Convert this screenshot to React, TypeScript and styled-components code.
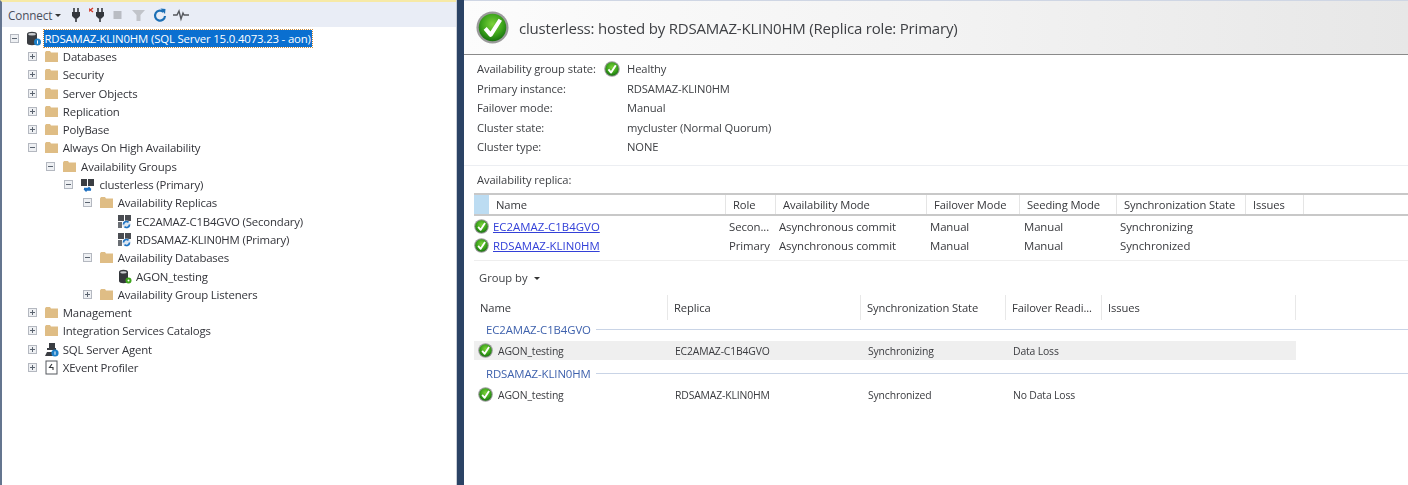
import React, { useId } from "react";
import styled, { createGlobalStyle } from "styled-components";

const GlobalStyle = createGlobalStyle`
  html, body { margin: 0; padding: 0; background: #fff; }
  body { font-family: "Open Sans", "Noto Sans", sans-serif; font-size: 12px; color: #2b2b2b; }
`;

const Page = styled.div`
  width: 1408px;
  height: 485px;
  display: flex;
  overflow: hidden;
  filter: blur(0.55px);
`;

/* ---------- left: object explorer ---------- */

const Explorer = styled.div`
  width: 456px;
  flex: none;
  display: flex;
  flex-direction: column;
  border-left: 2px solid #64758f;
  box-sizing: border-box;
  border-top: 2px solid #f6e9a6;
`;

const Toolbar = styled.div`
  height: 25px;
  flex: none;
  display: flex;
  align-items: center;
  padding-left: 6px;
  background: #e9edf6;
  color: #4a4f5c;
`;

const ConnectLabel = styled.span`
  font-size: 11.7px;
  letter-spacing: -0.1px;
`;

const Caret = styled.span`
  width: 0;
  height: 0;
  margin: 1px 7px 0 3px;
  border-left: 3px solid transparent;
  border-right: 3px solid transparent;
  border-top: 3px solid #333;
`;

const ToolIcon = styled.svg`
  width: 16px;
  height: 16px;
  margin-right: 5px;
  flex: none;
`;

const Tree = styled.div`
  padding-top: 2px;
  display: flex;
  flex-direction: column;
`;

const TreeRow = styled.div<{ $level: number }>`
  height: 18.3px;
  display: flex;
  align-items: center;
  padding-left: ${(p) => 7.5 + p.$level * 18.3}px;
  white-space: nowrap;
`;

const Expander = styled.span`
  width: 9px;
  height: 9px;
  flex: none;
  box-sizing: border-box;
  border: 1px solid #b4b8c0;
  background: #eef0f3;
  color: #5b6470;
  position: relative;
  margin-right: 7px;
  &::before {
    content: "";
    position: absolute;
    left: 1px;
    right: 1px;
    top: 3px;
    height: 1px;
    background: currentColor;
  }
`;

const ExpanderPlus = styled(Expander)`
  &::after {
    content: "";
    position: absolute;
    top: 1px;
    bottom: 1px;
    left: 3px;
    width: 1px;
    background: currentColor;
  }
`;

const ExpanderGap = styled.span`
  width: 16px;
  flex: none;
`;

const NodeIcon = styled.svg`
  width: 15px;
  height: 15px;
  flex: none;
  margin-right: 4px;
`;

const NodeLabel = styled.span<{ $selected?: boolean }>`
  font-size: 11.4px;
  letter-spacing: -0.17px;
  line-height: 17px;
  color: ${(p) => (p.$selected ? "#fff" : "#33343a")};
  background: ${(p) => (p.$selected ? "#0a6fd0" : "transparent")};
  outline: ${(p) => (p.$selected ? "1px dotted #c98a3c" : "none")};
  padding: ${(p) => (p.$selected ? "0 1px" : "0")};
  margin-left: ${(p) => (p.$selected ? "-1px" : "0")};
`;

/* ---------- right: dashboard ---------- */

const Divider = styled.div`
  width: 8px;
  flex: none;
  background: linear-gradient(to right, #c9ced6 0, #c9ced6 1.5px, #2b4365 1.5px);
`;

const Dashboard = styled.div`
  flex: 1;
  min-width: 0;
  display: flex;
  flex-direction: column;
`;

const Banner = styled.div`
  height: 53px;
  flex: none;
  display: flex;
  align-items: center;
  padding-left: 12px;
  gap: 10px;
  background: linear-gradient(to right, #fcfcfc 0, #f3f3f3 50%, #e7e7e7 100%);
  border-top: 1px solid #cfd6e4;
  border-bottom: 1px solid #8a8a8a;
`;

const BannerTitle = styled.div`
  font-size: 15px;
  letter-spacing: -0.2px;
  color: #3f4145;
`;

const Info = styled.div`
  padding: 4px 0 8px 13px;
  display: grid;
  grid-template-columns: 150px 1fr;
  grid-auto-rows: 19.5px;
  align-items: center;
  border-bottom: 1px solid #eceef2;
`;

const InfoLabel = styled.div`
  font-size: 11.2px;
  letter-spacing: -0.1px;
  color: #3f4145;
`;

const InfoValue = styled.div`
  font-size: 11.2px;
  letter-spacing: -0.1px;
  color: #3f4145;
  position: relative;
`;

const HealthFlag = styled.span`
  position: absolute;
  left: -23px;
  top: 0;
`;

const SectionTitle = styled.div`
  padding: 6px 0 0 13px;
  height: 21px;
  font-size: 11.2px;
  letter-spacing: -0.1px;
  color: #3f4145;
`;

const replicaColumns = "15px 237px 50px 151px 93px 97px 129px 58px 1fr";
const stateColumns = "194px 193px 145px 96px 194px 1fr";

const ReplicaHeader = styled.div`
  margin-left: 10px;
  height: 23px;
  display: grid;
  grid-template-columns: ${replicaColumns};
  border-top: 2px solid #c8c8c8;
  border-bottom: 2px solid #c8c8c8;
  box-sizing: border-box;
`;

const HeaderStub = styled.div`
  background: #bcdcf2;
`;

const HeaderCell = styled.div`
  display: flex;
  align-items: center;
  padding-left: 7px;
  font-size: 11.2px;
  letter-spacing: -0.1px;
  color: #36373b;
  border-right: 1px solid #e5e5e5;
  white-space: nowrap;
`;

const ReplicaRows = styled.div`
  margin-left: 10px;
  padding: 1px 0 5px;
  border-bottom: 1px solid #eeeeee;
`;

const ReplicaRow = styled.div`
  height: 19px;
  display: grid;
  grid-template-columns: 19px 236px 50px 151px 94px 96px 1fr;
  align-items: center;
  font-size: 11.4px;
  letter-spacing: -0.1px;
  color: #3a3b3f;
`;

const NameLink = styled.span`
  color: #3340d8;
  letter-spacing: 0.03px;
  text-decoration: underline;
`;

const GroupBy = styled.div`
  height: 34px;
  display: flex;
  align-items: center;
  gap: 6px;
  padding-left: 15px;
  font-size: 11.2px;
  color: #3f4145;
`;

const GroupCaret = styled(Caret)`
  margin: 1px 0 0 0;
`;

const StateHeader = styled.div`
  height: 25px;
  display: grid;
  grid-template-columns: ${stateColumns};
  margin-left: 10px;
  margin-bottom: 3px;
`;

const StateHeaderCell = styled(HeaderCell)<{ $open?: boolean }>`
  padding-left: 6px;
  border-right: ${(p) => (p.$open ? "none" : "1px solid #e8e8e8")};
`;

const GroupRow = styled.div`
  height: 14px;
  margin: 0 0 4.5px 22px;
  display: flex;
  align-items: center;
  gap: 5px;
  font-size: 11.4px;
  letter-spacing: -0.1px;
  color: #3f62ad;
`;

const GroupRule = styled.span`
  flex: 1;
  height: 1px;
  background: #c9d4e6;
`;

const StateRow = styled.div<{ $shaded?: boolean }>`
  height: 19px;
  width: 818px;
  margin: 0 0 6.5px 10px;
  padding-left: 4px;
  display: grid;
  grid-template-columns: 20px 177px 193px 145px 1fr;
  align-items: center;
  font-size: 10.4px;
  letter-spacing: -0.15px;
  color: #3a3b3f;
  background: ${(p) => (p.$shaded ? "#efefef" : "transparent")};
`;

/* ---------- icons ---------- */

function StatusIcon({ size }: { size: number }) {
  const id = useId();
  return (
    <svg width={size} height={size} viewBox="0 0 36 36" style={{ flex: "none", display: "block" }}>
      <defs>
        <radialGradient id={id} cx="50%" cy="38%" r="62%">
          <stop offset="0%" stopColor="#7cd23a" />
          <stop offset="60%" stopColor="#3ea51c" />
          <stop offset="100%" stopColor="#17720f" />
        </radialGradient>
      </defs>
      <circle cx="18" cy="18" r="17.5" fill="#9a9a9a" />
      <circle cx="18" cy="18" r="15" fill={`url(#${id})`} />
      <path d="M10 19l6 7L26.5 9.5" fill="none" stroke="#fff" strokeWidth="4.4" strokeLinejoin="round" />
    </svg>
  );
}

const Folder = () => (
  <NodeIcon viewBox="0 0 15 15">
    <path d="M1 3.5V13h13V3.5H7L6 2H2L1 3.5z" fill="#dfbd85" />
  </NodeIcon>
);

const ServerIcon = () => (
  <NodeIcon viewBox="0 0 15 15">
    <path d="M1 3c0-3 10-3 10 0v9c0 3-10 3-10 0z" fill="#3a3d42" />
    <ellipse cx="6" cy="3.2" rx="3.8" ry="1.2" fill="#c9ccd0" />
    <circle cx="11.5" cy="11" r="3.5" fill="#1c7fc8" />
    <rect x="11" y="9.4" width="1" height="3.4" fill="#fff" />
  </NodeIcon>
);

const ClusterIcon = () => (
  <NodeIcon viewBox="0 0 15 15">
    <rect x="1" y="2" width="6" height="7" fill="#3a3d42" />
    <rect x="8" y="2" width="6" height="7" fill="#3a3d42" />
    <path d="M4 11.5h6l-1.5-1.5M11 13H5l1.5 1.5" fill="none" stroke="#1c6fc0" strokeWidth="1.3" />
  </NodeIcon>
);

const ReplicaIcon = () => (
  <NodeIcon viewBox="0 0 15 15">
    <rect x="1" y="1" width="6" height="6" fill="#4a4d52" />
    <rect x="8" y="1" width="6" height="6" fill="#4a4d52" />
    <rect x="1" y="8" width="4" height="6" fill="#6a6e74" />
    <circle cx="9.5" cy="10.5" r="4" fill="#dbe6f2" />
    <path d="M6.5 10.5a3 3 0 0 1 5-2.2M12.5 10.5a3 3 0 0 1-5 2.2" fill="none" stroke="#1c73c4" strokeWidth="1.7" />
  </NodeIcon>
);

const DatabaseIcon = () => (
  <NodeIcon viewBox="0 0 15 15">
    <path d="M2 3c0-3 9-3 9 0v9c0 3-9 3-9 0z" fill="#34373b" />
    <ellipse cx="6.5" cy="3.4" rx="3.2" ry="1.1" fill="#c9ccd0" />
    <circle cx="11.5" cy="11.5" r="3" fill="#3ea51c" />
    <circle cx="11.5" cy="11.5" r="1" fill="#fff" />
  </NodeIcon>
);

const AgentIcon = () => (
  <NodeIcon viewBox="0 0 15 15">
    <rect x="5" y="1" width="6" height="5" fill="#3a3d42" />
    <rect x="3" y="6" width="9" height="2" fill="#3a3d42" />
    <path d="M1 14l2-4h5l1 4z" fill="#3a3d42" />
    <circle cx="11" cy="11" r="3.6" fill="#1c7fc8" />
    <rect x="10.5" y="9.4" width="1" height="3.4" fill="#fff" />
  </NodeIcon>
);

const ProfilerIcon = () => (
  <NodeIcon viewBox="0 0 15 15">
    <rect x="2" y="1" width="11" height="13" fill="#fff" stroke="#55585e" />
    <path d="M8 4L5.5 7.5H9V10" fill="none" stroke="#33363a" strokeWidth="1.1" />
  </NodeIcon>
);

const PlugIcon = ({ cross }: { cross?: boolean }) => (
  <ToolIcon viewBox="0 0 16 16">
    {cross && <path d="M-1 1l5 4M4 1l-5 4" stroke="#d23a2a" strokeWidth="1.4" />}
    <g transform={cross ? "translate(3 0)" : undefined}>
      <path d="M6 1v4M10 1v4" stroke="#33363c" strokeWidth="1.6" />
      <path d="M4 5h8v4l-2.5 2.5h-3L4 9z" fill="#33363c" />
      <rect x="7.2" y="11" width="1.6" height="4" fill="#33363c" />
    </g>
  </ToolIcon>
);

const StopIcon = () => (
  <ToolIcon viewBox="0 0 16 16">
    <rect x="3.5" y="4" width="8" height="8" fill="#b9bcc3" />
  </ToolIcon>
);

const FilterIcon = () => (
  <ToolIcon viewBox="0 0 16 16">
    <path d="M1 3h13L9.5 8v6h-4V8z" fill="#c1c4ca" />
  </ToolIcon>
);

const RefreshIcon = () => (
  <ToolIcon viewBox="0 0 16 16">
    <path d="M11.5 5a5 5 0 1 0 1.5 4" fill="none" stroke="#1c6fb5" strokeWidth="2.2" />
    <path d="M8.5 1.5l5 .5-.5 5z" fill="#1c6fb5" />
  </ToolIcon>
);

const ActivityIcon = () => (
  <ToolIcon viewBox="0 0 16 16">
    <path d="M0 8h4l2-4 2 8 2-6 1 2h5" fill="none" stroke="#55585e" strokeWidth="1.4" />
  </ToolIcon>
);

/* ---------- data ---------- */

type Node = { level: number; open?: boolean; leaf?: boolean; label: string; icon?: React.ReactNode };

const nodes: Node[] = [
  { level: 1, label: "Databases" },
  { level: 1, label: "Security" },
  { level: 1, label: "Server Objects" },
  { level: 1, label: "Replication" },
  { level: 1, label: "PolyBase" },
  { level: 1, open: true, label: "Always On High Availability" },
  { level: 2, open: true, label: "Availability Groups" },
  { level: 3, open: true, label: "clusterless (Primary)", icon: <ClusterIcon /> },
  { level: 4, open: true, label: "Availability Replicas" },
  { level: 5, leaf: true, label: "EC2AMAZ-C1B4GVO (Secondary)", icon: <ReplicaIcon /> },
  { level: 5, leaf: true, label: "RDSAMAZ-KLIN0HM (Primary)", icon: <ReplicaIcon /> },
  { level: 4, open: true, label: "Availability Databases" },
  { level: 5, leaf: true, label: "AGON_testing", icon: <DatabaseIcon /> },
  { level: 4, label: "Availability Group Listeners" },
  { level: 1, label: "Management" },
  { level: 1, label: "Integration Services Catalogs" },
  { level: 1, label: "SQL Server Agent", icon: <AgentIcon /> },
  { level: 1, label: "XEvent Profiler", icon: <ProfilerIcon /> },
];

const replicaHeads = ["Name", "Role", "Availability Mode", "Failover Mode", "Seeding Mode", "Synchronization State", "Issues"];

const replicas = [
  { name: "EC2AMAZ-C1B4GVO", role: "Secon...", sync: "Synchronizing" },
  { name: "RDSAMAZ-KLIN0HM", role: "Primary", sync: "Synchronized" },
];

const infoRows = [
  ["Primary instance:", "RDSAMAZ-KLIN0HM"],
  ["Failover mode:", "Manual"],
  ["Cluster state:", "mycluster (Normal Quorum)"],
  ["Cluster type:", "NONE"],
];

const stateHeads = ["Name", "Replica", "Synchronization State", "Failover Readi...", "Issues"];

const groups = [
  { name: "EC2AMAZ-C1B4GVO", sync: "Synchronizing", loss: "Data Loss", shaded: true },
  { name: "RDSAMAZ-KLIN0HM", sync: "Synchronized", loss: "No Data Loss", shaded: false },
];

export default function App() {
  return (
    <>
      <GlobalStyle />
      <Page>
        <Explorer>
          <Toolbar>
            <ConnectLabel>Connect</ConnectLabel>
            <Caret />
            <PlugIcon />
            <PlugIcon cross />
            <StopIcon />
            <FilterIcon />
            <RefreshIcon />
            <ActivityIcon />
          </Toolbar>
          <Tree>
            <TreeRow $level={0}>
              <Expander />
              <ServerIcon />
              <NodeLabel $selected>RDSAMAZ-KLIN0HM (SQL Server 15.0.4073.23 - aon)</NodeLabel>
            </TreeRow>
            {nodes.map((n) => (
              <TreeRow key={n.label} $level={n.level}>
                {n.leaf ? <ExpanderGap /> : n.open ? <Expander /> : <ExpanderPlus />}
                {n.icon ?? <Folder />}
                <NodeLabel>{n.label}</NodeLabel>
              </TreeRow>
            ))}
          </Tree>
        </Explorer>
        <Divider />
        <Dashboard>
          <Banner>
            <StatusIcon size={33} />
            <BannerTitle>clusterless: hosted by RDSAMAZ-KLIN0HM (Replica role: Primary)</BannerTitle>
          </Banner>
          <Info>
            <InfoLabel>Availability group state:</InfoLabel>
            <InfoValue>
              <HealthFlag>
                <StatusIcon size={16} />
              </HealthFlag>
              Healthy
            </InfoValue>
            {infoRows.map(([label, value]) => (
              <React.Fragment key={label}>
                <InfoLabel>{label}</InfoLabel>
                <InfoValue>{value}</InfoValue>
              </React.Fragment>
            ))}
          </Info>
          <SectionTitle>Availability replica:</SectionTitle>
          <ReplicaHeader>
            <HeaderStub />
            {replicaHeads.map((h) => (
              <HeaderCell key={h}>{h}</HeaderCell>
            ))}
          </ReplicaHeader>
          <ReplicaRows>
            {replicas.map((r) => (
              <ReplicaRow key={r.name}>
                <StatusIcon size={15} />
                <NameLink>{r.name}</NameLink>
                <span>{r.role}</span>
                <span>Asynchronous commit</span>
                <span>Manual</span>
                <span>Manual</span>
                <span>{r.sync}</span>
              </ReplicaRow>
            ))}
          </ReplicaRows>
          <GroupBy>
            Group by <GroupCaret />
          </GroupBy>
          <StateHeader>
            {stateHeads.map((h) => (
              <StateHeaderCell key={h}>{h}</StateHeaderCell>
            ))}
            <StateHeaderCell $open />
          </StateHeader>
          {groups.map((g) => (
            <React.Fragment key={g.name}>
              <GroupRow>
                {g.name}
                <GroupRule />
              </GroupRow>
              <StateRow $shaded={g.shaded}>
                <StatusIcon size={15} />
                <span>AGON_testing</span>
                <span>{g.name}</span>
                <span>{g.sync}</span>
                <span>{g.loss}</span>
              </StateRow>
            </React.Fragment>
          ))}
        </Dashboard>
      </Page>
    </>
  );
}
